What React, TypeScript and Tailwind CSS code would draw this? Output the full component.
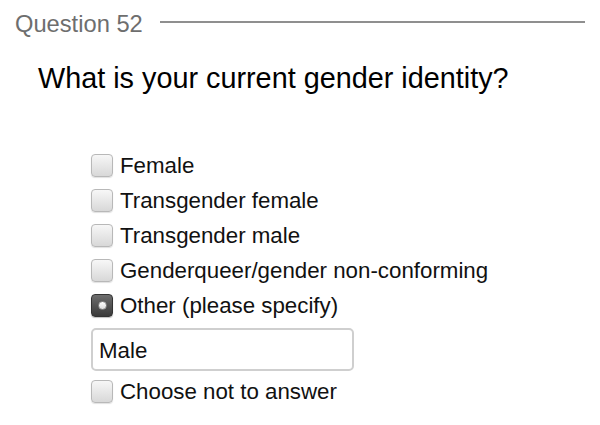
const options = [
  { label: "Female", checked: false },
  { label: "Transgender female", checked: false },
  { label: "Transgender male", checked: false },
  { label: "Genderqueer/gender non-conforming", checked: false },
  { label: "Other (please specify)", checked: true },
]

function Box({ checked }: { checked: boolean }) {
  if (checked) {
    return (
      <div className="flex h-[23px] w-[22px] shrink-0 items-center justify-center rounded-[4px] border border-[#333] bg-gradient-to-b from-[#6e6e6e] to-[#3a3a3a] shadow-[0_1px_1px_rgba(0,0,0,0.25)]">
        <div className="h-[9px] w-[9px] rounded-full border border-[#8a8a8a] bg-gradient-to-b from-white to-[#dcdcdc]" />
      </div>
    )
  }
  return (
    <div className="h-[23px] w-[22px] shrink-0 rounded-[4px] border border-[#b8b8b8] bg-gradient-to-b from-[#f7f7f7] to-[#d8d8d8] shadow-[0_1px_1px_rgba(0,0,0,0.12)]" />
  )
}

function Option({ label, checked }: { label: string; checked: boolean }) {
  return (
    <div className="flex h-[35px] items-center gap-[7px]">
      <Box checked={checked} />
      <span className="text-[22.3px] leading-[35px] text-[#111]">{label}</span>
    </div>
  )
}

export default function App() {
  return (
    <div className="h-[425px] w-[600px] overflow-hidden bg-white font-['Liberation_Sans',Arial,sans-serif]">
      {/* Header */}
      <div className="flex items-start pl-[15px] pr-[15px] pt-[10px]">
        <span className="text-[23.7px] leading-[28px] text-[#6e6e6e]">Question 52</span>
        <div className="ml-[17px] mt-[11px] h-[2px] flex-1 bg-[#8f8f8f]" />
      </div>

      {/* Question */}
      <h1 className="ml-[38px] mt-[23px] text-[28.8px] leading-[34px] text-black">
        What is your current gender identity?
      </h1>

      {/* Answers */}
      <div className="ml-[91px] mt-[53px] flex flex-col">
        {options.map((o) => (
          <Option key={o.label} label={o.label} checked={o.checked} />
        ))}
        <div className="mt-[5px] flex h-[43px] w-[263px] items-center rounded-[5px] border-2 border-[#cfcfcf] px-[6px] pt-[2px] text-[22.3px] text-[#111]">
          Male
        </div>
        <div className="mt-[3px]">
          <Option label="Choose not to answer" checked={false} />
        </div>
      </div>
    </div>
  )
}
